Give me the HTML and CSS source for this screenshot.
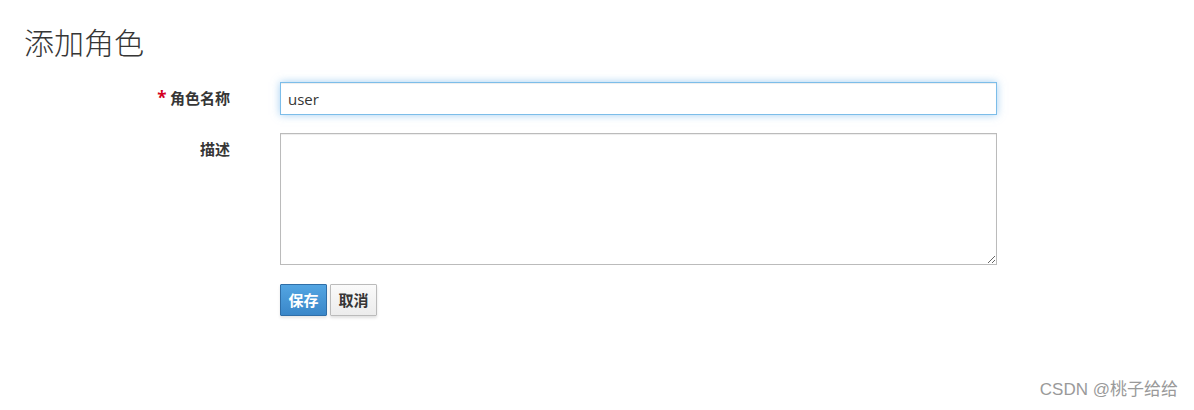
FILE: index.html
```html
<!DOCTYPE html>
<html lang="zh-CN">
<head>
<meta charset="utf-8">
<title>添加角色</title>
<link rel="stylesheet" href="styles.css">
</head>
<body>
<div class="page">
  <h1 class="title">添加角色</h1>
  <form class="form">
    <label class="label" for="name"><span class="req">*</span> 角色名称</label>
    <div class="control"><input id="name" class="input focused" type="text" value="user"></div>
    <label class="label" for="desc">描述</label>
    <div class="control"><textarea id="desc" class="textarea"></textarea></div>
    <div></div>
    <div class="actions">
      <button type="button" class="btn btn-primary">保存</button>
      <button type="button" class="btn btn-default">取消</button>
    </div>
  </form>
</div>
<div class="watermark">CSDN @桃子给给</div>
</body>
</html>
```
FILE: styles.css
```css
html, body {
  margin: 0;
  padding: 0;
  background: #fff;
  width: 1194px;
  height: 410px;
  overflow: hidden;
}
body {
  font-family: "Open Sans", "Noto Sans CJK SC", sans-serif;
  color: #363636;
  position: relative;
}
.page {
  padding: 23px 24px 0;
}
.title {
  margin: 0;
  font-family: "Noto Sans CJK SC", sans-serif;
  font-size: 30px;
  font-weight: 300;
  line-height: 36px;
  color: #363636;
}
.form {
  margin-top: 23px;
  display: grid;
  grid-template-columns: 206px 717px;
  column-gap: 50px;
  row-gap: 18px;
  align-items: start;
}
.label {
  text-align: right;
  font-family: "Noto Sans CJK SC", sans-serif;
  font-weight: 700;
  font-size: 15px;
  line-height: 20px;
  padding-top: 6px;
  color: #363636;
}
.req {
  color: #d4001f;
  font-family: "Open Sans", sans-serif;
  font-size: 17px;
}
.control {
  display: flex;
}
.input {
  box-sizing: border-box;
  width: 717px;
  height: 33px;
  margin: 0;
  padding: 2px 7px;
  font-family: "Open Sans", sans-serif;
  font-size: 15px;
  color: #363636;
  border: 1px solid #bbb;
  background: #fff;
  outline: none;
}
.input.focused {
  border-color: #7cbde9;
  box-shadow: inset 0 1px 1px rgba(0,0,0,.075), 0 0 8px rgba(102,175,233,.6);
}
.textarea {
  box-sizing: border-box;
  width: 717px;
  height: 132px;
  margin: 0;
  padding: 4px 7px;
  border: 1px solid #bbb;
  box-shadow: inset 0 1px 1px rgba(0,0,0,.075);
  font-family: "Open Sans", sans-serif;
  font-size: 14px;
  outline: none;
  resize: vertical;
}
.actions {
  display: flex;
  gap: 3px;
  margin-top: 1px;
}
.btn {
  box-sizing: border-box;
  height: 32px;
  padding: 0;
  font-family: "Noto Sans CJK SC", sans-serif;
  font-weight: 700;
  font-size: 15px;
  line-height: 30px;
  border: 1px solid;
  border-radius: 1px;
  cursor: pointer;
}
.btn-primary {
  width: 47px;
  color: #fff;
  background: linear-gradient(#53a5e2, #3a87c9);
  border-color: #2f6ea7;
  box-shadow: 0 2px 3px rgba(0,0,0,.1);
}
.btn-default {
  width: 47px;
  color: #363636;
  background: linear-gradient(#fafafa, #ececec);
  border-color: #bbb;
  box-shadow: 0 2px 3px rgba(0,0,0,.12);
}
.watermark {
  position: absolute;
  right: 16px;
  top: 379px;
  font-family: "Liberation Sans", "Noto Sans CJK SC", sans-serif;
  font-size: 17px;
  line-height: 22px;
  color: #9a9a9a;
}
```
